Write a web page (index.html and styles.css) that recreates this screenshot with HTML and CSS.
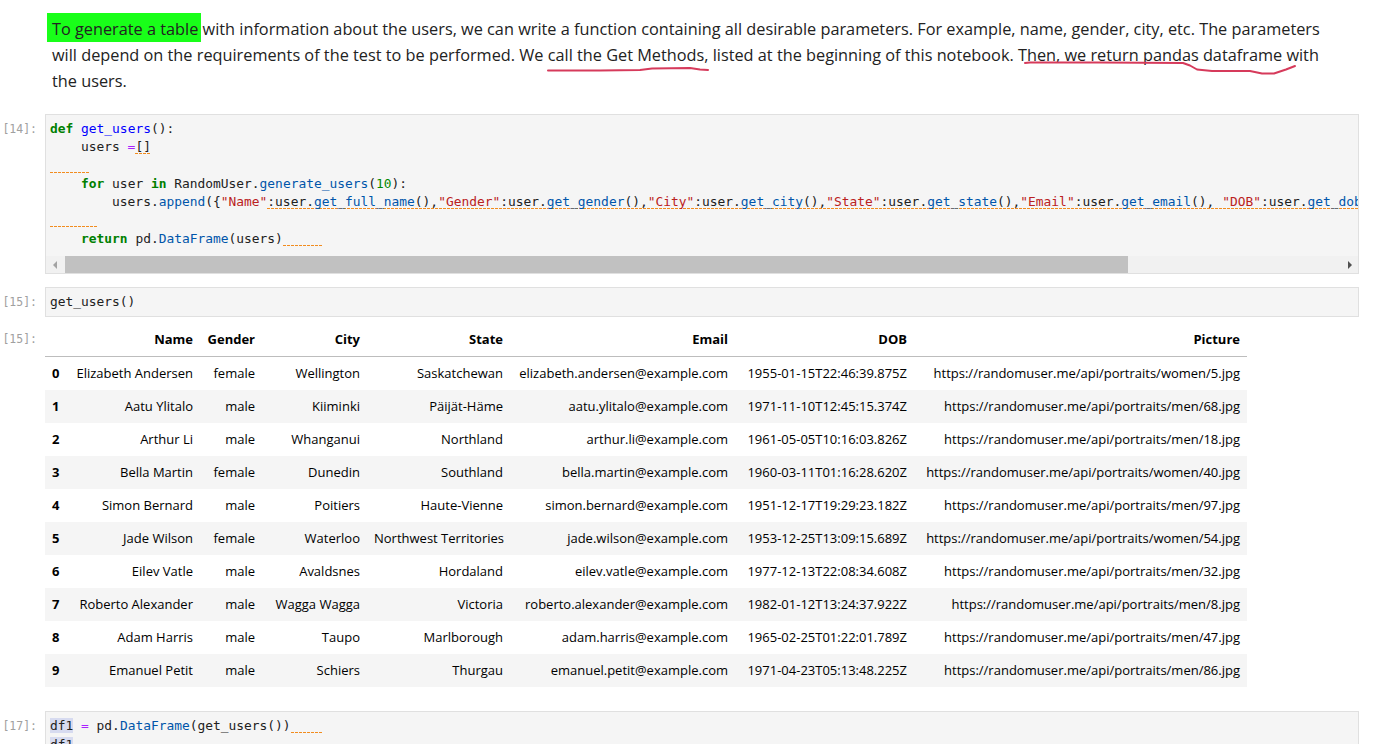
FILE: index.html
```html
<!DOCTYPE html>
<html lang="en">
<head>
<meta charset="utf-8">
<title>Notebook</title>
<link rel="stylesheet" href="styles.css">
</head>
<body>
<div class="notebook">
  <div class="md-cell">
    <p class="md"><span class="hl">To generate a table</span> with information about the users, we can write a function containing all desirable parameters. For example, name, gender, city, etc. The parameters<br>will depend on the requirements of the test to be performed. We call the Get Methods, listed at the beginning of this notebook. Then, we return pandas dataframe with<br>the users.</p>
    <svg class="ink" width="1373" height="100" viewBox="0 0 1373 100" aria-hidden="true">
      <path d="M548,70.5 L600,70.5 L640,70 L652,68.5 L690,68 L700,69.5 L708,70" />
      <path d="M1025,63 L1030,62.5 L1100,62.5 L1183,63 L1190,65.5 L1197,69.5 L1212,71 L1250,71 L1262,73.5 L1274,73.5 L1286,69.5 L1295,66" />
    </svg>
  </div>

  <div class="cell cell-14">
    <div class="prompt">[14]:</div>
    <div class="editor">
<pre class="code"><span class="kw">def</span> <span class="def">get_users</span>():
    users <span class="op">=</span><span class="lint">[]</span>
<span class="lint">     </span>
    <span class="kw">for</span> user <span class="kw">in</span> RandomUser.<span class="prop">generate_users</span>(<span class="num">10</span>):
        users.<span class="prop">append</span>({<span class="str">"Name"</span><span class="lint">:user.<span class="prop">get_full_name</span>(),<span class="str">"Gender"</span>:user.<span class="prop">get_gender</span>(),<span class="str">"City"</span>:user.<span class="prop">get_city</span>(),<span class="str">"State"</span>:user.<span class="prop">get_state</span>(),<span class="str">"Email"</span>:user.<span class="prop">get_email</span>(), <span class="str">"DOB"</span>:user.<span class="prop">get_dob</span>(),<span class="str">"Picture"</span>:user.<span class="prop">get_picture</span>()})</span>
<span class="lint">      </span>
    <span class="kw">return</span> pd.<span class="prop">DataFrame</span>(users)<span class="lint">     </span></pre>
      <div class="hscroll">
        <span class="arrow arrow-left"></span>
        <div class="track"><div class="thumb" style="width: 83.3%"></div></div>
        <span class="arrow arrow-right"></span>
      </div>
    </div>
  </div>

  <div class="cell cell-15">
    <div class="prompt">[15]:</div>
    <div class="editor">
<pre class="code code-short">get_users()</pre>
    </div>
  </div>

  <div class="cell output">
    <div class="prompt prompt-out">[15]:</div>
    <div class="output-body">
      <table class="df">
        <colgroup>
          <col style="width:22px"><col style="width:133px"><col style="width:62px"><col style="width:105px"><col style="width:143px"><col style="width:225px"><col style="width:179px"><col style="width:333px">
        </colgroup>
        <thead>
          <tr><th></th><th>Name</th><th>Gender</th><th>City</th><th>State</th><th>Email</th><th>DOB</th><th>Picture</th></tr>
        </thead>
        <tbody>
          <tr><th>0</th><td>Elizabeth Andersen</td><td>female</td><td>Wellington</td><td>Saskatchewan</td><td>elizabeth.andersen@example.com</td><td>1955-01-15T22:46:39.875Z</td><td>https://randomuser.me/api/portraits/women/5.jpg</td></tr>
          <tr><th>1</th><td>Aatu Ylitalo</td><td>male</td><td>Kiiminki</td><td>Päijät-Häme</td><td>aatu.ylitalo@example.com</td><td>1971-11-10T12:45:15.374Z</td><td>https://randomuser.me/api/portraits/men/68.jpg</td></tr>
          <tr><th>2</th><td>Arthur Li</td><td>male</td><td>Whanganui</td><td>Northland</td><td>arthur.li@example.com</td><td>1961-05-05T10:16:03.826Z</td><td>https://randomuser.me/api/portraits/men/18.jpg</td></tr>
          <tr><th>3</th><td>Bella Martin</td><td>female</td><td>Dunedin</td><td>Southland</td><td>bella.martin@example.com</td><td>1960-03-11T01:16:28.620Z</td><td>https://randomuser.me/api/portraits/women/40.jpg</td></tr>
          <tr><th>4</th><td>Simon Bernard</td><td>male</td><td>Poitiers</td><td>Haute-Vienne</td><td>simon.bernard@example.com</td><td>1951-12-17T19:29:23.182Z</td><td>https://randomuser.me/api/portraits/men/97.jpg</td></tr>
          <tr><th>5</th><td>Jade Wilson</td><td>female</td><td>Waterloo</td><td>Northwest Territories</td><td>jade.wilson@example.com</td><td>1953-12-25T13:09:15.689Z</td><td>https://randomuser.me/api/portraits/women/54.jpg</td></tr>
          <tr><th>6</th><td>Eilev Vatle</td><td>male</td><td>Avaldsnes</td><td>Hordaland</td><td>eilev.vatle@example.com</td><td>1977-12-13T22:08:34.608Z</td><td>https://randomuser.me/api/portraits/men/32.jpg</td></tr>
          <tr><th>7</th><td>Roberto Alexander</td><td>male</td><td>Wagga Wagga</td><td>Victoria</td><td>roberto.alexander@example.com</td><td>1982-01-12T13:24:37.922Z</td><td>https://randomuser.me/api/portraits/men/8.jpg</td></tr>
          <tr><th>8</th><td>Adam Harris</td><td>male</td><td>Taupo</td><td>Marlborough</td><td>adam.harris@example.com</td><td>1965-02-25T01:22:01.789Z</td><td>https://randomuser.me/api/portraits/men/47.jpg</td></tr>
          <tr><th>9</th><td>Emanuel Petit</td><td>male</td><td>Schiers</td><td>Thurgau</td><td>emanuel.petit@example.com</td><td>1971-04-23T05:13:48.225Z</td><td>https://randomuser.me/api/portraits/men/86.jpg</td></tr>
        </tbody>
      </table>
    </div>
  </div>

  <div class="cell cell-17">
    <div class="prompt">[17]:</div>
    <div class="editor">
<pre class="code"><span class="match">df1</span> <span class="op">=</span> pd.<span class="prop">DataFrame</span>(get_users())<span class="lint">    </span>
<span class="match">df1</span></pre>
    </div>
  </div>
</div>
</body>
</html>
```

FILE: styles.css
```css
html, body {
  margin: 0;
  padding: 0;
  background: #ffffff;
  overflow: hidden;
}

body {
  font-family: "Open Sans", "Noto Sans", sans-serif;
  color: #212121;
}

.notebook {
  padding: 0 14px 0 0;
}

/* Markdown cell */
.md-cell {
  position: relative;
  padding: 16px 0 0 52px;
}

.md {
  margin: 0;
  font-size: 16.3px;
  line-height: 26px;
  color: #222222;
  white-space: nowrap;
}

.hl {
  background: #19ff19;
  padding: 5px 3px 2px 5px;
  margin-left: -5px;
  margin-right: -3px;
}

.ink {
  position: absolute;
  left: 0;
  top: 0;
  pointer-events: none;
}

.ink path {
  fill: none;
  stroke: #d63a5b;
  stroke-width: 2;
  stroke-linecap: round;
  stroke-linejoin: round;
}

/* Code cells */
.cell {
  display: flex;
  align-items: flex-start;
}

.cell-14 { margin-top: 20px; }
.cell-15 { margin-top: 13px; }
.output { margin-top: 4px; }
.cell-17 { margin-top: 24px; }

.prompt {
  flex: none;
  width: 45px;
  box-sizing: border-box;
  padding: 6px 8px 0 0;
  text-align: right;
  font-family: "DejaVu Sans Mono", monospace;
  font-size: 11.5px;
  line-height: 18.3px;
  color: #a0a0a0;
}

.prompt-out {
  padding-top: 9px;
}

.editor {
  flex: 1;
  min-width: 0;
  background: #f5f5f5;
  border: 1px solid #e0e0e0;
  overflow: hidden;
}

.code {
  margin: 0;
  padding: 5px 4px 8px 4px;
  font-family: "DejaVu Sans Mono", monospace;
  font-size: 12.9px;
  line-height: 18.3px;
  white-space: pre;
  overflow: hidden;
  color: #212121;
}

.code-short {
  padding: 5px 4px 5px 4px;
}

.cell-17 .code {
  padding-bottom: 40px;
}

.kw { color: #008000; font-weight: bold; }
.def { color: #0000ff; }
.op { color: #aa22ff; }
.str { color: #ba2121; }
.num { color: #008800; }
.prop { color: #0055aa; }

.lint {
  background-image: repeating-linear-gradient(to right, #f28c1e 0, #f28c1e 3px, transparent 3px, transparent 4px);
  background-repeat: no-repeat;
  background-size: 100% 1px;
  background-position: 0 100%;
}

.match {
  background: #d7dbf0;
}

/* Horizontal scrollbar */
.hscroll {
  display: flex;
  height: 17px;
  background: #f1f1f1;
}

.arrow {
  flex: none;
  width: 17px;
  height: 17px;
  display: flex;
  align-items: center;
  justify-content: center;
}

.arrow::before {
  content: "";
  width: 0;
  height: 0;
  border-top: 4px solid transparent;
  border-bottom: 4px solid transparent;
}

.arrow-left::before {
  border-right: 4px solid #a3a3a3;
}

.arrow-right::before {
  border-left: 4px solid #505050;
}

.track {
  flex: 1;
  height: 17px;
  padding-left: 2px;
}

.thumb {
  height: 17px;
  background: #c1c1c1;
}

/* DataFrame output */
.output-body {
  flex: 1;
  min-width: 0;
}

.df {
  border-collapse: collapse;
  table-layout: fixed;
  width: 1202px;
  font-family: "Open Sans", "Noto Sans", sans-serif;
  font-size: 13px;
  color: #000000;
}

.df th,
.df td {
  padding: 7px 7px;
  line-height: 19px;
  text-align: right;
  white-space: nowrap;
  vertical-align: middle;
}

.df thead th {
  font-weight: bold;
  border-bottom: 1px solid #bdbdbd;
  vertical-align: bottom;
  padding-top: 9px;
}

.df tbody th {
  font-weight: bold;
  text-align: left;
}

.df tbody tr:nth-child(even) {
  background: #f5f5f5;
}
```
